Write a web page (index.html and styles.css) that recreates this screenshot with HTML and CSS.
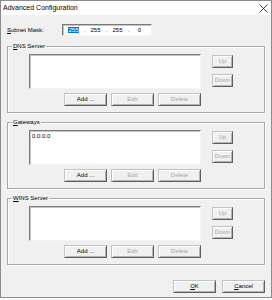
FILE: index.html
```html
<!DOCTYPE html>
<html>
<head>
<meta charset="utf-8">
<title>Advanced Configuration</title>
<link rel="stylesheet" href="styles.css">
</head>
<body>
<div class="window">
  <div class="titlebar">
    <span class="title">Advanced Configuration</span>
    <svg class="close" width="9" height="9" viewBox="0 0 9 9"><path d="M0.5 0.5L8.5 8.5M8.5 0.5L0.5 8.5" stroke="#333" stroke-width="0.9" fill="none"/></svg>
  </div>
  <div class="content">
    <div class="subnet-row">
      <span class="label"><u>S</u>ubnet Mask:</span>
      <div class="ipbox">
        <span class="oct"><span class="sel">255</span></span><span class="dot">.</span><span class="oct">255</span><span class="dot">.</span><span class="oct">255</span><span class="dot">.</span><span class="oct">0</span>
      </div>
    </div>

    <div class="group">
      <span class="legend"><u>D</u>NS Server</span>
      <div class="list"></div>
      <div class="side">
        <button class="btn small dis">Up</button>
        <button class="btn small dis">Down</button>
      </div>
      <div class="actions">
        <button class="btn">Add ...</button>
        <button class="btn dis">Edit</button>
        <button class="btn dis">Delete</button>
      </div>
    </div>

    <div class="group">
      <span class="legend"><u>G</u>ateways</span>
      <div class="list"><div class="item">0.0.0.0</div></div>
      <div class="side">
        <button class="btn small dis">Up</button>
        <button class="btn small dis">Down</button>
      </div>
      <div class="actions">
        <button class="btn">Add ...</button>
        <button class="btn dis">Edit</button>
        <button class="btn dis">Delete</button>
      </div>
    </div>

    <div class="group">
      <span class="legend"><u>W</u>INS Server</span>
      <div class="list"></div>
      <div class="side">
        <button class="btn small dis">Up</button>
        <button class="btn small dis">Down</button>
      </div>
      <div class="actions">
        <button class="btn">Add ...</button>
        <button class="btn dis">Edit</button>
        <button class="btn dis">Delete</button>
      </div>
    </div>

    <div class="footer">
      <button class="btn"><u>O</u>K</button>
      <button class="btn"><u>C</u>ancel</button>
    </div>
  </div>
</div>
</body>
</html>
```

FILE: styles.css
```css
html, body {
  margin: 0;
  padding: 0;
  background: #ffffff;
  font-family: "Liberation Sans", Arial, sans-serif;
}

.window {
  width: 272px;
  height: 298px;
  box-sizing: border-box;
  border: 1px solid #8c8c8c;
  background: #f0f0f0;
  display: flex;
  flex-direction: column;
}

.titlebar {
  height: 14px;
  flex: none;
  background: #ffffff;
  display: flex;
  align-items: center;
  justify-content: space-between;
  padding: 0 3px 0 2px;
}

.title {
  font-size: 7px;
  line-height: 8px;
  color: #000;
}

.close {
  display: block;
}

.content {
  padding: 0 6px;
  display: flex;
  flex-direction: column;
  font-size: 6px;
  line-height: 7px;
  color: #000;
}

.subnet-row {
  margin-top: 9px;
  height: 12px;
  display: flex;
  align-items: center;
}

.label {
  width: 55px;
}

u {
  text-decoration: underline;
  text-underline-offset: 1px;
}

.ipbox {
  width: 90px;
  height: 12px;
  box-sizing: border-box;
  background: #ffffff;
  border: 1px solid;
  border-color: #7a7a7a #f4f4f4 #f4f4f4 #7a7a7a;
  box-shadow: inset 1px 1px 0 #c4c4c4;
  display: flex;
  align-items: center;
  padding-left: 2px;
}

.oct {
  width: 17px;
  text-align: center;
}

.dot {
  width: 5px;
  text-align: center;
}

.sel {
  background: #0078d7;
  color: #ffffff;
  padding: 0 0.5px;
}

.group {
  position: relative;
  margin-top: 10px;
  height: 67px;
  box-sizing: border-box;
  border: 1px solid #a9a9a9;
  box-shadow: inset 1px 1px 0 #ffffff, 1px 1px 0 #ffffff;
  padding: 7px 0 6px 21px;
  display: grid;
  grid-template-columns: 172px 21px;
  grid-template-rows: 35px 13px;
  column-gap: 11px;
  row-gap: 4px;
}

.group + .group {
  margin-top: 9px;
}

.legend {
  position: absolute;
  top: -4px;
  left: 4px;
  padding: 0 1px;
  background: #f0f0f0;
}

.list {
  grid-column: 1;
  grid-row: 1;
  box-sizing: border-box;
  background: #ffffff;
  border: 1px solid;
  border-color: #7a7a7a #f4f4f4 #f4f4f4 #7a7a7a;
  box-shadow: inset 1px 1px 0 #c4c4c4;
  padding: 2px 0 0 2px;
}

.item {
  line-height: 7px;
}

.side {
  grid-column: 2;
  grid-row: 1;
  display: flex;
  flex-direction: column;
  gap: 6px;
  padding-top: 1px;
}

.actions {
  grid-column: 1;
  grid-row: 2;
  display: flex;
  justify-content: flex-end;
  gap: 4px;
}

.btn {
  width: 43px;
  height: 13px;
  box-sizing: border-box;
  margin: 0;
  padding: 0;
  font-family: "Liberation Sans", Arial, sans-serif;
  font-size: 6px;
  line-height: 7px;
  color: #000;
  background: #f0f0f0;
  border: 1px solid;
  border-color: #c2c2c2 #5e5e5e #5e5e5e #c2c2c2;
  box-shadow: inset 1px 1px 0 #ffffff, inset -1px -1px 0 #b4b4b4;
  text-align: center;
}

.btn.small {
  width: 21px;
}

.btn.dis {
  color: #a6a6a6;
}

.footer {
  margin-top: 15px;
  display: flex;
  justify-content: flex-end;
  gap: 6px;
}
```
